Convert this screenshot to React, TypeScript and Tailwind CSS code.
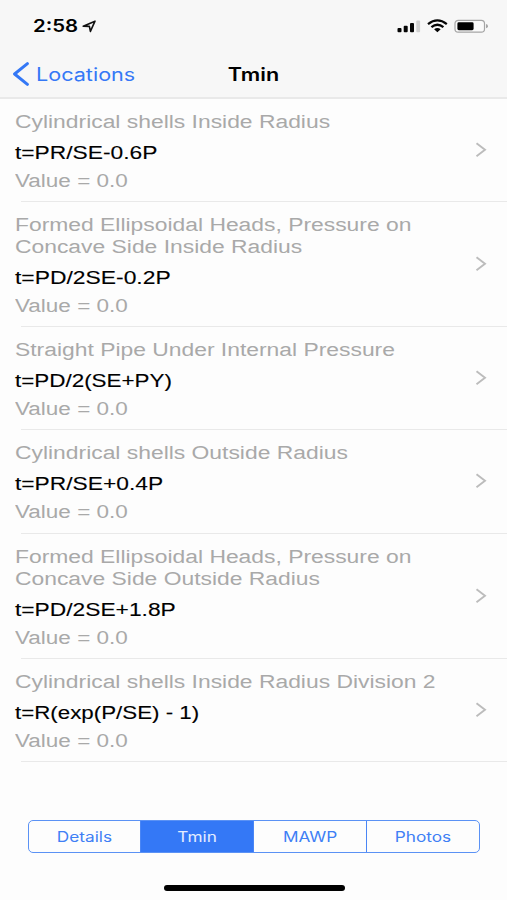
import React from "react";

type Entry = { title: string[]; formula: string; height: string; stretch: string };

const entries: Entry[] = [
  { title: ["Cylindrical shells Inside Radius"], formula: "t=PR/SE-0.6P", height: "h-[103px]", stretch: "scale-x-[1.265]" },
  { title: ["Formed Ellipsoidal Heads, Pressure on", "Concave Side Inside Radius"], formula: "t=PD/2SE-0.2P", height: "h-[125px]", stretch: "scale-x-[1.27]" },
  { title: ["Straight Pipe Under Internal Pressure"], formula: "t=PD/2(SE+PY)", height: "h-[103px]", stretch: "scale-x-[1.245]" },
  { title: ["Cylindrical shells Outside Radius"], formula: "t=PR/SE+0.4P", height: "h-[104px]", stretch: "scale-x-[1.265]" },
  { title: ["Formed Ellipsoidal Heads, Pressure on", "Concave Side Outside Radius"], formula: "t=PD/2SE+1.8P", height: "h-[125px]", stretch: "scale-x-[1.265]" },
  { title: ["Cylindrical shells Inside Radius Division 2"], formula: "t=R(exp(P/SE) - 1)", height: "h-[103px]", stretch: "scale-x-[1.24]" },
];

const tabs = ["Details", "Tmin", "MAWP", "Photos"];

function StatusBar() {
  return (
    <div className="flex h-[50px] items-center justify-between pt-[2px] pr-[19px] pl-[33px]">
      <div className="flex items-center">
        <span className="w-[49px] origin-left scale-x-[1.2] text-[17px] leading-5 font-semibold whitespace-nowrap">2:58</span>
        <svg width="15" height="13" viewBox="0 0 15 13" fill="none" stroke="#111" strokeWidth="1.6" strokeLinejoin="round">
          <path d="M1.2 6.2 13 1.2 8.4 11.4 7.4 6.4Z" />
        </svg>
      </div>
      <svg width="92" height="16" viewBox="0 0 92 16">
        <rect x="1.5" y="10" width="4" height="4.3" rx="1" fill="#050505" />
        <rect x="7.7" y="7.7" width="4" height="6.6" rx="1" fill="#050505" />
        <rect x="14" y="5" width="4" height="9.3" rx="1" fill="#050505" />
        <rect x="20.3" y="2.4" width="3.8" height="11.9" rx="1" fill="#cfcfcf" />
        <g fill="none" stroke="#050505" strokeWidth="2.3">
          <path d="M32 6.1Q41.4-1.3 50.8 6.1" />
          <path d="M35.4 9.2Q41.4 4.4 47.4 9.2" />
        </g>
        <path d="M38.1 11.2Q41.4 8.9 44.7 11.2L41.4 14.3Z" fill="#050505" />
        <rect x="59" y="2.3" width="29.5" height="11.8" rx="3.2" fill="#fafafa" stroke="#a5a5a5" strokeWidth="1.2" />
        <rect x="61.4" y="4.3" width="16.2" height="7.9" rx="1.4" fill="#000" />
        <path d="M90 6.1q2 .5 2 2.1t-2 2.1Z" fill="#a5a5a5" />
      </svg>
    </div>
  );
}

function NavBar() {
  return (
    <div className="grid h-12 grid-cols-3 items-center">
      <div className="flex items-center gap-[6px] pl-3 text-[#3478f6]">
        <svg width="18" height="24" viewBox="0 0 18 24" fill="none" stroke="currentColor" strokeWidth="3" strokeLinecap="round" strokeLinejoin="round">
          <path d="M15.4 1.7 2.6 12l12.8 10.4" />
        </svg>
        <span className="origin-left scale-x-[1.2] pt-[2px] text-[18px] leading-6 whitespace-nowrap">Locations</span>
      </div>
      <h1 className="scale-x-[1.2] pt-[2px] text-center text-[18px] leading-6 font-semibold">Tmin</h1>
    </div>
  );
}

function Row({ entry }: { entry: Entry }) {
  return (
    <li className={`${entry.height} flex flex-col`}>
      <div className="flex min-h-0 flex-1 items-center justify-between pr-5 pl-[14.5px]">
        <div className="pt-[3px] text-[18px] leading-[22px] whitespace-nowrap text-[#a9a9a9]">
          {entry.title.map((line) => (
            <div key={line} className="origin-left scale-x-[1.27]">{line}</div>
          ))}
          <div className={`mt-[9px] origin-left text-black [-webkit-text-stroke:0.12px_black] ${entry.stretch}`}>{entry.formula}</div>
          <div className="mt-[6px] origin-left scale-x-[1.25]">Value = 0.0</div>
        </div>
        <svg width="12" height="16" viewBox="0 0 12 16" fill="none" stroke="#bcbcbc" strokeWidth="1.9">
          <path d="M1.5 1.3 10 7.8 1.5 14.3" />
        </svg>
      </div>
      <div className="ml-[21px] h-[1.5px] shrink-0 bg-[#e9e9e9]" />
    </li>
  );
}

export default function App() {
  return (
    <div className="flex h-[900px] w-[507px] flex-col overflow-hidden bg-[#fdfdfd] font-[Inter,sans-serif] text-black">
      <header className="h-[99px] shrink-0 border-b-2 border-[#e9e9e9] bg-[#f7f7f7]">
        <StatusBar />
        <NavBar />
      </header>
      <ul className="font-['Liberation_Sans',Arial,sans-serif]">
        {entries.map((entry) => (
          <Row key={entry.title.join(" ")} entry={entry} />
        ))}
      </ul>
      <nav className="mx-[27.5px] mt-[58px] flex h-[33px] shrink-0 overflow-hidden rounded-[5px] border-[1.5px] border-[#5b92f5]">
        {tabs.map((tab, i) => (
          <button
            key={tab}
            className={`flex flex-1 items-center justify-center text-[14px] ${i > 0 ? "border-l border-[#4a86f5]" : ""} ${tab === "Tmin" ? "bg-[#3478f6] text-[#e4edff]" : "text-[#3f7ff5]"}`}
          >
            <span className="scale-x-[1.23] pb-px">{tab}</span>
          </button>
        ))}
      </nav>
      <div className="mt-8 ml-[163.5px] h-[6px] w-[181px] shrink-0 rounded-full bg-black" />
    </div>
  );
}
